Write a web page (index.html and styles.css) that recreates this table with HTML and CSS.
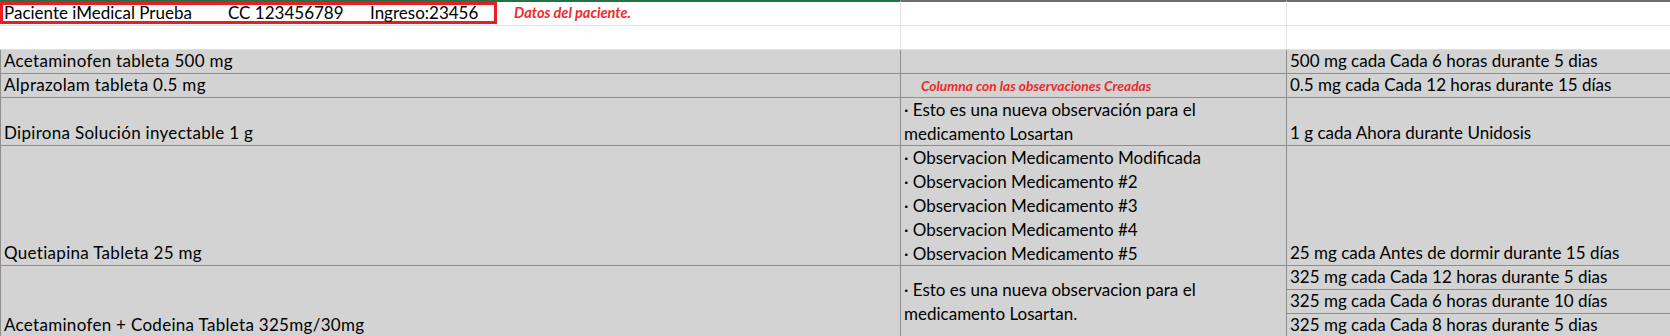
FILE: index.html
```html
<!DOCTYPE html>
<html lang="es">
<head>
<meta charset="utf-8">
<title>Hoja de medicamentos</title>
<link rel="stylesheet" href="styles.css">
</head>
<body>
<div class="sheet">
  <!-- row 1 -->
  <div class="cell white col1 top-green">
    <div class="patient">
      <span class="pf pf-name">Paciente iMedical Prueba</span>
      <span class="pf pf-cc">CC 123456789</span>
      <span class="pf pf-ing">Ingreso:23456</span>
    </div>
    <span class="note note-pac">Datos del paciente.</span>
  </div>
  <div class="cell white col2 top-gray"></div>
  <div class="cell white col3 top-gray"></div>

  <!-- row 2 -->
  <div class="cell white col1"></div>
  <div class="cell white col2"></div>
  <div class="cell white col3"></div>

  <!-- row 3 -->
  <div class="cell gray col1 first bottom">Acetaminofen tableta 500 mg</div>
  <div class="cell gray col2"></div>
  <div class="cell gray col3 bottom">500 mg cada Cada 6 horas durante 5 dias</div>

  <!-- row 4 -->
  <div class="cell gray col1 first bottom">Alprazolam tableta 0.5 mg</div>
  <div class="cell gray col2 middle"><span class="note note-col">Columna con las observaciones Creadas</span></div>
  <div class="cell gray col3 bottom">0.5 mg cada Cada 12 horas durante 15 días</div>

  <!-- row 5 -->
  <div class="cell gray col1 first bottom">Dipirona Solución inyectable 1 g</div>
  <div class="cell gray col2 lines">
    <span>· Esto es una nueva observación para el</span>
    <span>medicamento Losartan</span>
  </div>
  <div class="cell gray col3 bottom">1 g cada Ahora durante Unidosis</div>

  <!-- row 6 -->
  <div class="cell gray col1 first bottom">Quetiapina Tableta 25 mg</div>
  <div class="cell gray col2 lines">
    <span>· Observacion Medicamento Modificada</span>
    <span>· Observacion Medicamento #2</span>
    <span>· Observacion Medicamento #3</span>
    <span>· Observacion Medicamento #4</span>
    <span>· Observacion Medicamento #5</span>
  </div>
  <div class="cell gray col3 bottom">25 mg cada Antes de dormir durante 15 días</div>

  <!-- row 7 (merged over three sub-rows) -->
  <div class="cell gray col1 first bottom span3">Acetaminofen + Codeina Tableta 325mg/30mg</div>
  <div class="cell gray col2 lines middle span3">
    <span>· Esto es una nueva observacion para el</span>
    <span>medicamento Losartan.</span>
  </div>
  <div class="cell gray col3 bottom">325 mg cada Cada 12 horas durante 5 dias</div>
  <div class="cell gray col3 bottom">325 mg cada Cada 6 horas durante 10 días</div>
  <div class="cell gray col3 bottom">325 mg cada Cada 8 horas durante 5 dias</div>
</div>
</body>
</html>
```

FILE: styles.css
```css
html, body {
  margin: 0;
  padding: 0;
  background: #ffffff;
}

body {
  width: 1670px;
  height: 336px;
  overflow: hidden;
  font-family: "Lato", "Liberation Sans", sans-serif;
  font-size: 17px;
  color: #000000;
}

.sheet {
  display: grid;
  grid-template-columns: 901px 386px 383px;
  grid-template-rows: 26px 24px 24px 24px 48px 120px 24px 24px 24px;
}

.cell {
  box-sizing: border-box;
  border-right: 1px solid;
  border-bottom: 1px solid;
  padding-left: 3px;
  line-height: 24px;
  white-space: nowrap;
  overflow: visible;
  display: flex;
  flex-direction: column;
  min-width: 0;
}

.white {
  background: #ffffff;
  border-color: #e1e1e1;
}

.gray {
  background: #d3d3d3;
  border-color: #8e8e8e;
}

.first {
  border-left: 1px solid #8e8e8e;
  letter-spacing: 0.3px;
}

.col3 {
  border-right: none;
}

.top-green {
  border-top: 2px solid #217346;
}

.top-gray {
  border-top: 2px solid #6d6d6d;
}

.bottom {
  justify-content: flex-end;
}

.middle {
  justify-content: center;
}

.lines span {
  display: block;
  line-height: 24px;
}

.span3 {
  grid-row: span 3;
}

/* row 1 */
.col1.top-green {
  flex-direction: row;
  align-items: flex-start;
  padding-left: 0;
}

.patient {
  box-sizing: border-box;
  width: 497px;
  height: 22px;
  border: 3px solid #ec1c24;
  display: flex;
  align-items: center;
  padding-left: 1px;
  background: #ffffff;
}

.pf {
  display: block;
  line-height: 16px;
}

.pf-name { width: 224px; }
.pf-cc { width: 142px; }

.note {
  color: #ee2a2a;
  font-weight: 700;
  font-style: italic;
}

.note-pac {
  margin-left: 17px;
  font-size: 14.5px;
  line-height: 22px;
}

.note-col {
  padding-left: 17px;
  font-size: 13.8px;
  line-height: 20px;
}
```
